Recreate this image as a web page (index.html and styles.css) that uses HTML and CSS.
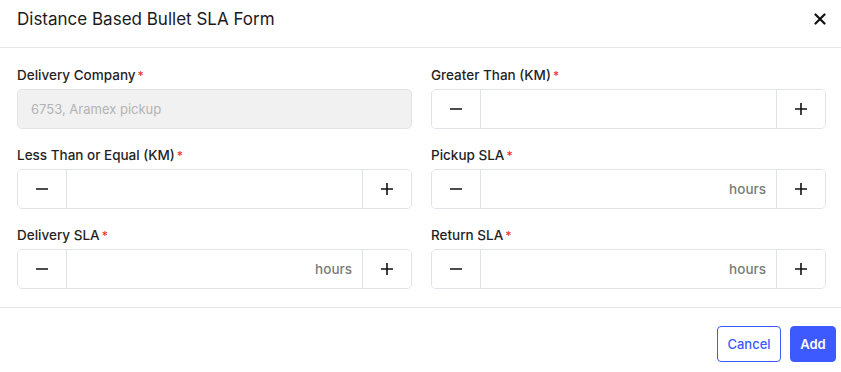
FILE: index.html
```html
<!DOCTYPE html>
<html lang="en">
  <head>
    <meta charset="UTF-8" />
    <title>Distance Based Bullet SLA Form</title>
    <link rel="stylesheet" href="styles.css">
  </head>
  <body>
    <div class="modal">
      <!-- Шапка -->
      <div class="modal-header">
        <h2>Distance Based Bullet SLA Form</h2>
        <button class="close-btn" aria-label="close">
          <svg width="12" height="12" viewBox="0 0 12 12">
            <path d="M1.5 1.5L10.5 10.5M10.5 1.5L1.5 10.5" stroke="#111" stroke-width="2.2" stroke-linecap="round" />
          </svg>
        </button>
      </div>

      <!-- Поля формы -->
      <div class="modal-body">
        <div class="field">
          <label>Delivery Company<span class="req">*</span></label>
          <input class="text-input" type="text" placeholder="6753, Aramex pickup" disabled />
        </div>

        <div class="field">
          <label>Greater Than (KM)<span class="req">*</span></label>
          <div class="stepper">
            <button class="step minus"><svg width="14" height="14" viewBox="0 0 14 14"><path d="M1 7H13" stroke="#111" stroke-width="1.6" /></svg></button>
            <div class="step-value"></div>
            <button class="step plus"><svg width="14" height="14" viewBox="0 0 14 14"><path d="M1 7H13M7 1V13" stroke="#111" stroke-width="1.6" /></svg></button>
          </div>
        </div>

        <div class="field">
          <label>Less Than or Equal (KM)<span class="req">*</span></label>
          <div class="stepper">
            <button class="step minus"><svg width="14" height="14" viewBox="0 0 14 14"><path d="M1 7H13" stroke="#111" stroke-width="1.6" /></svg></button>
            <div class="step-value"></div>
            <button class="step plus"><svg width="14" height="14" viewBox="0 0 14 14"><path d="M1 7H13M7 1V13" stroke="#111" stroke-width="1.6" /></svg></button>
          </div>
        </div>

        <div class="field">
          <label>Pickup SLA<span class="req">*</span></label>
          <div class="stepper">
            <button class="step minus"><svg width="14" height="14" viewBox="0 0 14 14"><path d="M1 7H13" stroke="#111" stroke-width="1.6" /></svg></button>
            <div class="step-value">hours</div>
            <button class="step plus"><svg width="14" height="14" viewBox="0 0 14 14"><path d="M1 7H13M7 1V13" stroke="#111" stroke-width="1.6" /></svg></button>
          </div>
        </div>

        <div class="field">
          <label>Delivery SLA<span class="req">*</span></label>
          <div class="stepper">
            <button class="step minus"><svg width="14" height="14" viewBox="0 0 14 14"><path d="M1 7H13" stroke="#111" stroke-width="1.6" /></svg></button>
            <div class="step-value">hours</div>
            <button class="step plus"><svg width="14" height="14" viewBox="0 0 14 14"><path d="M1 7H13M7 1V13" stroke="#111" stroke-width="1.6" /></svg></button>
          </div>
        </div>

        <div class="field">
          <label>Return SLA<span class="req">*</span></label>
          <div class="stepper">
            <button class="step minus"><svg width="14" height="14" viewBox="0 0 14 14"><path d="M1 7H13" stroke="#111" stroke-width="1.6" /></svg></button>
            <div class="step-value">hours</div>
            <button class="step plus"><svg width="14" height="14" viewBox="0 0 14 14"><path d="M1 7H13M7 1V13" stroke="#111" stroke-width="1.6" /></svg></button>
          </div>
        </div>
      </div>

      <!-- Кнопки -->
      <div class="modal-footer">
        <button class="btn btn-outline">Cancel</button>
        <button class="btn btn-primary">Add</button>
      </div>
    </div>
  </body>
</html>
```

FILE: styles.css
```css
* {
  margin: 0;
  padding: 0;
  box-sizing: border-box;
}

body {
  font-family: Inter, "Noto Sans", sans-serif;
  background: #fff;
  color: #1a1a1a;
}

.modal {
  width: 841px;
}

/* Шапка */
.modal-header {
  height: 48px;
  display: flex;
  align-items: center;
  justify-content: space-between;
  padding: 0 13px 0 17px;
  border-bottom: 1px solid #e4e6ea;
}

.modal-header h2 {
  font-size: 17px;
  font-weight: 400;
  color: #1a1a1a;
  margin-top: -10px;
}

.close-btn {
  border: none;
  background: none;
  width: 16px;
  height: 16px;
  display: flex;
  align-items: center;
  justify-content: center;
  margin-top: -10px;
  cursor: pointer;
}

/* Сетка полей */
.modal-body {
  display: grid;
  grid-template-columns: 1fr 1fr;
  column-gap: 19px;
  row-gap: 16px;
  padding: 17px 15px 18px 17px;
  border-bottom: 1px solid #e4e6ea;
}

.field label {
  display: block;
  font-size: 13.5px;
  font-weight: 450;
  color: #1f1f1f;
  height: 20px;
  line-height: 20px;
  margin-bottom: 4px;
}

.req {
  color: #f0352f;
  margin-left: 2px;
  font-size: 12px;
}

.text-input {
  width: 100%;
  height: 40px;
  border: 1px solid #e2e4e8;
  border-radius: 5px;
  background: #f1f1f1;
  padding: 0 13px;
  font-family: inherit;
  font-size: 13px;
  outline: none;
}

.text-input::placeholder {
  color: #b3b3b3;
}

/* Степпер */
.stepper {
  display: flex;
  height: 40px;
  border: 1px solid #e0e4e9;
  border-radius: 5px;
  overflow: hidden;
}

.step {
  width: 49px;
  flex: none;
  border: none;
  background: #fff;
  display: flex;
  align-items: center;
  justify-content: center;
  cursor: pointer;
}

.step.minus {
  border-right: 1px solid #e0e4e9;
}

.step.plus {
  border-left: 1px solid #e0e4e9;
}

.step-value {
  flex: 1;
  display: flex;
  align-items: center;
  justify-content: flex-end;
  padding-right: 10px;
  font-size: 13.5px;
  font-weight: 500;
  color: #7a7a7a;
}

/* Подвал */
.modal-footer {
  display: flex;
  justify-content: flex-end;
  gap: 9px;
  padding: 18px 5px 0 0;
}

.btn {
  height: 36px;
  border-radius: 4px;
  font-family: inherit;
  font-size: 13px;
  font-weight: 500;
  cursor: pointer;
}

.btn-outline {
  width: 64px;
  background: #fff;
  border: 1px solid #3d5afe;
  color: #3d5afe;
}

.btn-primary {
  width: 46px;
  background: #3d5afe;
  border: 1px solid #3d5afe;
  color: #fff;
  font-weight: 600;
}
```
